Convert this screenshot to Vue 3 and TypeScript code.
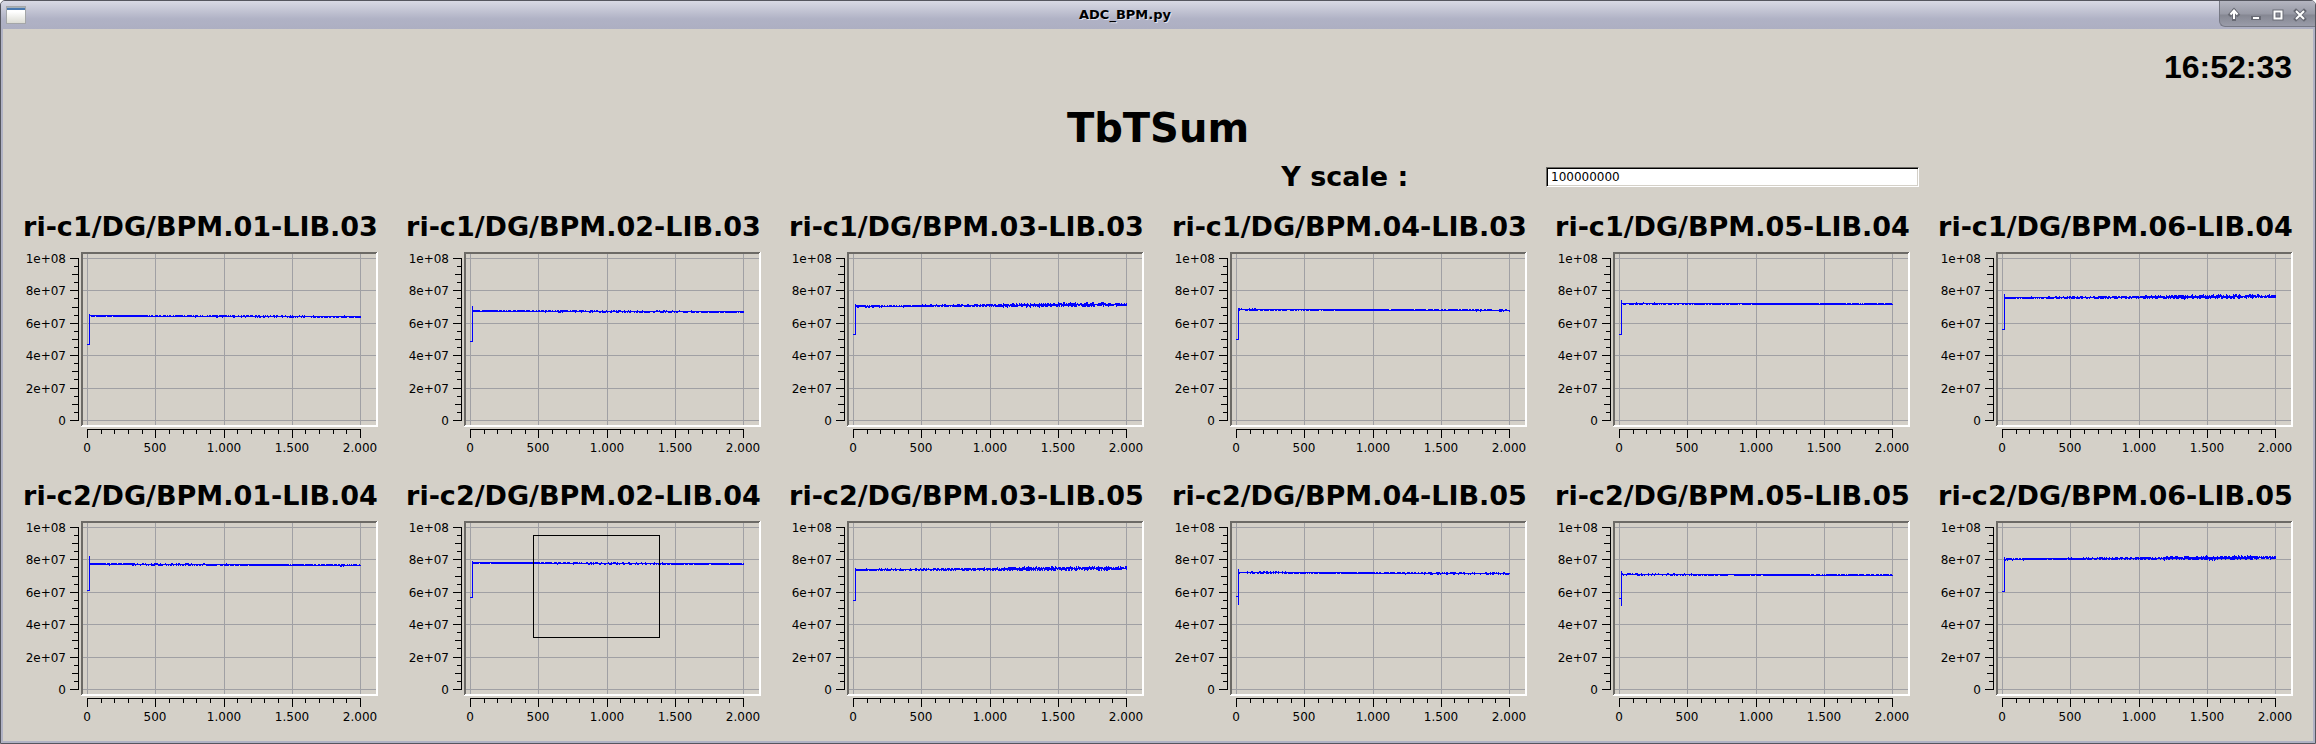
<script setup lang="ts">
import { ref } from 'vue'

interface Monitor {
  name: string
  injection: number
  start: number
  end: number
  noise: number
  peak?: number
  dip?: number
  selection?: boolean
}

const yScale = ref('100000000')
const clock = ref('16:52:33')

// Levels are in units of 1e7 counts.
const monitors: Monitor[] = [
  { name: 'ri-c1/DG/BPM.01-LIB.03', injection: 4.7, start: 6.46, end: 6.4, noise: 0 },
  { name: 'ri-c1/DG/BPM.02-LIB.03', injection: 4.9, start: 6.76, end: 6.7, noise: 0, peak: 7.05 },
  { name: 'ri-c1/DG/BPM.03-LIB.03', injection: 5.28, start: 7.04, end: 7.16, noise: 1 },
  { name: 'ri-c1/DG/BPM.04-LIB.03', injection: 5.02, start: 6.84, end: 6.8, noise: 0 },
  { name: 'ri-c1/DG/BPM.05-LIB.04', injection: 5.3, start: 7.21, end: 7.18, noise: 0, peak: 7.42 },
  { name: 'ri-c1/DG/BPM.06-LIB.04', injection: 5.64, start: 7.56, end: 7.66, noise: 1, peak: 7.8 },
  { name: 'ri-c2/DG/BPM.01-LIB.04', injection: 6.12, start: 7.74, end: 7.66, noise: 0, peak: 8.2 },
  { name: 'ri-c2/DG/BPM.02-LIB.04', injection: 5.68, start: 7.82, end: 7.74, noise: 0, selection: true },
  { name: 'ri-c2/DG/BPM.03-LIB.05', injection: 5.52, start: 7.38, end: 7.48, noise: 1 },
  { name: 'ri-c2/DG/BPM.04-LIB.05', injection: 5.72, start: 7.22, end: 7.15, noise: 0, peak: 7.42, dip: 5.26 },
  { name: 'ri-c2/DG/BPM.05-LIB.05', injection: 5.64, start: 7.1, end: 7.05, noise: 0, peak: 7.28, dip: 5.2 },
  { name: 'ri-c2/DG/BPM.06-LIB.05', injection: 6.02, start: 8.04, end: 8.14, noise: 1 },
]

const X0 = 73
const XSPAN = 273
const Y0 = 175
const YSPAN = 162

const xAt = (n: number) => X0 + Math.round((n / 2000) * XSPAN)
const yAt = (v: number) => Y0 - Math.round((v / 10) * YSPAN)

const xMajor = [0, 500, 1000, 1500, 2000].map((n) => ({
  x: xAt(n),
  label: n >= 1000 ? (n / 1000).toFixed(3) : String(n),
}))
const yMajor = [0, 2, 4, 6, 8, 10].map((v) => ({
  y: yAt(v),
  label: v === 0 ? '0' : v === 10 ? '1e+08' : `${v}e+07`,
}))

const cell = (x: number, y: number, w: number, h: number) => `M${x} ${y}h${w}v${h}h${-w}z`

const gridPath =
  xMajor.map((t) => cell(t.x, 9, 1, 171)).join('') + yMajor.map((t) => cell(69, t.y, 293, 1)).join('')

let axes = cell(X0, 184, XSPAN + 1, 1) + cell(64, 13, 1, YSPAN + 1)
for (let i = 0; i <= 20; i++) {
  axes += cell(xAt(i * 100), 184, 1, i % 5 === 0 ? 9 : 5)
  const len = i % 4 === 0 ? 9 : i % 2 === 0 ? 7 : 5
  axes += cell(65 - len, yAt(i / 2), len, 1)
}

function tracePath(m: Monitor, seed: number): string {
  let s = seed * 7919 + 17
  const rand = () => {
    s = (s * 1103515245 + 12345) % 2147483648
    return s / 2147483648
  }
  const top = yAt(m.peak ?? m.start + 0.1)
  const bottom = yAt(m.dip ?? m.injection)
  let d = cell(X0, yAt(m.injection), 3, 1) + cell(X0 + 2, top, 1, bottom - top + 1)
  for (let i = 3; i <= XSPAN; i++) {
    const t = i / XSPAN
    const exact = Y0 - ((m.start + (m.end - m.start) * t) / 10) * YSPAN
    const swell = m.noise * (0.1 + 1.3 * Math.exp(-(((t - 0.75) / 0.3) ** 2)))
    const a = Math.round(exact - rand() * (0.8 + swell))
    const b = Math.round(exact + rand() * (0.8 + swell))
    d += cell(X0 + i, a, 1, b - a + 1)
  }
  return d
}

const plots = monitors.map((m, i) => ({ ...m, trace: tracePath(m, i + 1) }))
</script>

<template>
  <div class="window">
    <header class="titlebar">
      <svg class="app-icon" width="20" height="18" viewBox="0 0 20 18" aria-hidden="true">
        <defs>
          <linearGradient id="sheet" x1="0" y1="0" x2="0" y2="1">
            <stop offset="0.3" stop-color="#ffffff" />
            <stop offset="1" stop-color="#dcdcd4" />
          </linearGradient>
        </defs>
        <rect width="20" height="18" fill="#a4a6a8" />
        <rect x="1" y="1" width="18" height="16" fill="url(#sheet)" />
        <rect x="1" y="1" width="18" height="1" fill="#a4b0b8" />
        <rect x="1" y="2" width="18" height="2" fill="#4878b0" />
      </svg>
      <span class="caption">ADC_BPM.py</span>
      <div class="controls">
        <button type="button" aria-label="Keep above">
          <svg viewBox="0 0 22 22"><path d="M11 16V8M7.500 11.500L11 7.500L14.500 11.500" /><path class="lit" d="M11 16V8M7.500 11.500L11 7.500L14.500 11.500" /></svg>
        </button>
        <button type="button" aria-label="Minimize">
          <svg viewBox="0 0 22 22"><path d="M8 15H14" /><path class="lit" d="M8 15H14" /></svg>
        </button>
        <button type="button" aria-label="Maximize">
          <svg viewBox="0 0 22 22"><path d="M7.500 8.500H14.500V15.500H7.500Z" /><path class="lit" d="M7.500 8.500H14.500V15.500H7.500Z" /></svg>
        </button>
        <button type="button" aria-label="Close">
          <svg viewBox="0 0 22 22"><path d="M7 8L15 16M15 8L7 16" /><path class="lit" d="M7 8L15 16M15 8L7 16" /></svg>
        </button>
      </div>
    </header>

    <main class="content">
      <time class="clock">{{ clock }}</time>
      <h1>TbTSum</h1>
      <div class="scale-row">
        <label for="y-scale">Y scale : </label>
        <input id="y-scale" v-model="yScale" type="text" />
      </div>
      <div class="plots">
        <section v-for="p in plots" :key="p.name" class="plot">
          <h2>{{ p.name }}</h2>
          <svg viewBox="0 0 373 223" role="img" :aria-label="p.name">
            <path class="grid" :d="gridPath" />
            <path class="shade" d="M67 7h297v2h-295v173h-2z" />
            <path class="light" d="M364 7v175h-297v-1l2 -1h293v-172z" />
            <path class="axis" :d="axes" />
            <text v-for="t in yMajor" :key="t.label" x="52" :y="t.y + 5" text-anchor="end">{{ t.label }}</text>
            <text v-for="t in xMajor" :key="t.label" :x="t.x" y="207" text-anchor="middle">{{ t.label }}</text>
            <path class="trace" :d="p.trace" />
            <rect v-if="p.selection" class="selection" x="136.500" y="21.500" width="126" height="102" />
          </svg>
        </section>
      </div>
    </main>
  </div>
</template>

<style>
body {
  margin: 0;
  background: #fff;
}
</style>

<style scoped>
.window {
  box-sizing: border-box;
  min-height: 100vh;
  display: flex;
  flex-direction: column;
  border: 1px solid #55565f;
  border-radius: 5px 5px 0 0;
  background: #b0b2c4;
  overflow: hidden;
  font-family: "DejaVu Sans", sans-serif;
  color: #000;
}

.titlebar {
  display: grid;
  grid-template-columns: auto 1fr auto;
  align-items: start;
  height: 28px;
  background: linear-gradient(#d8d9e4, #b0b2c5 18px, #adafc2);
}

.app-icon {
  margin: 5px 5px 0;
}

.caption {
  font-size: 13px;
  line-height: 28px;
  font-weight: bold;
  text-align: center;
  text-shadow: 1px 1px 0 #dfe1ee;
}

.controls {
  box-sizing: border-box;
  display: flex;
  height: 26px;
  padding: 2px 4px 0 3px;
  border: solid #777985;
  border-width: 0 0 1px 1px;
  border-radius: 0 0 0 6px;
  background: linear-gradient(#b4b5c0, #9799a5 13px, #858792 14px, #9a9ca9);
}

.controls button {
  width: 22px;
  height: 22px;
  padding: 0;
  border: 0;
  background: none;
}

.controls svg {
  display: block;
  width: 22px;
  height: 22px;
}

.controls path {
  fill: none;
  stroke: #686a74;
  stroke-width: 4;
  stroke-linecap: square;
}

.controls .lit {
  stroke: #fff;
  stroke-width: 2;
  stroke-linecap: butt;
}

.content {
  flex: 1;
  display: flex;
  flex-direction: column;
  margin: 0 2px 2px;
  padding: 20px 11px 0;
  background: #d4d0c8;
}

.clock {
  align-self: flex-end;
  margin-right: 10px;
  font: bold 32px/36px "Liberation Sans", sans-serif;
}

h1 {
  margin: 20px 0 0;
  font-size: 40px;
  line-height: 46px;
  text-align: center;
}

.scale-row,
.plots {
  display: grid;
  grid-template-columns: repeat(6, minmax(0, 1fr));
  column-gap: 10px;
}

.scale-row {
  align-items: center;
  margin-top: 8px;
}

.scale-row label {
  grid-column: 4;
  font-size: 27px;
  line-height: 36px;
  font-weight: bold;
  text-align: center;
  white-space: pre;
}

.scale-row input {
  box-sizing: border-box;
  width: 100%;
  height: 20px;
  padding: 0 4px;
  border: 1px solid;
  border-color: #6c6a66 #fff #fff #6c6a66;
  border-radius: 0;
  background: #fff;
  box-shadow: inset 1px 1px 0 #000, inset -1px -1px 0 #d4d0c8;
  font: 12px/16px "DejaVu Sans", sans-serif;
  color: #000;
  outline: none;
}

.plots {
  margin-top: 14px;
  row-gap: 10px;
}

h2 {
  margin: 0;
  font-size: 27px;
  line-height: 36px;
  text-align: center;
  white-space: nowrap;
}

.plot svg {
  display: block;
  width: 100%;
  shape-rendering: crispEdges;
}

.plot text {
  font-size: 12px;
}

.grid {
  fill: #a0a0a4;
}

.shade {
  fill: #6c6a66;
}

.light {
  fill: #fff;
}

.axis {
  fill: #000;
}

.trace {
  fill: #00f;
}

.selection {
  fill: none;
  stroke: #000;
}
</style>
